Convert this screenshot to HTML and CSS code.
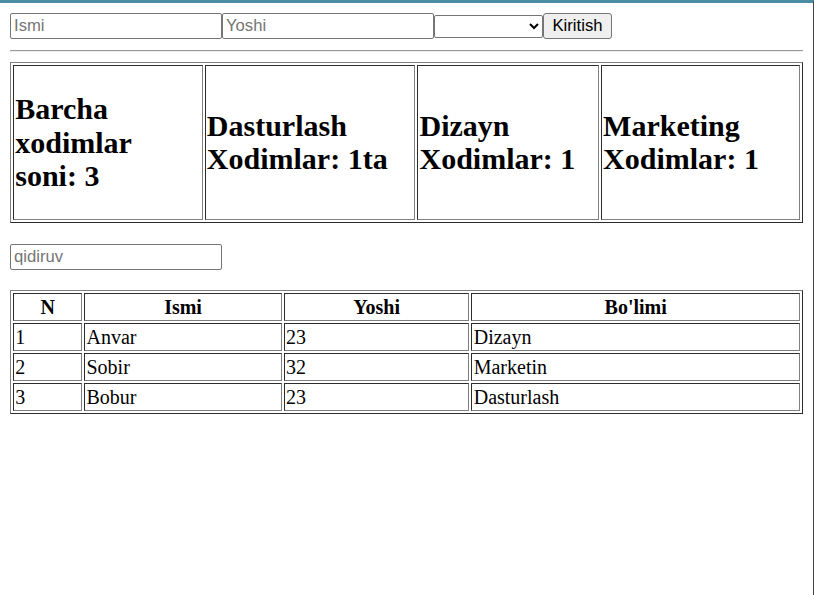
FILE: index.html
```html
<!DOCTYPE html>
<html lang="uz">
<head>
<meta charset="utf-8">
<title>Xodimlar</title>
<link rel="stylesheet" href="styles.css">
</head>
<body>
<div class="page">
  <div class="form-row"><input class="field" type="text" placeholder="Ismi"><input class="field" type="text" placeholder="Yoshi"><select class="picker"><option value=""></option><option>Dasturlash</option><option>Dizayn</option><option>Marketing</option></select><button class="btn" type="button">Kiritish</button></div>
  <hr class="rule">
  <table class="grid stats">
    <tr>
      <td class="s1"><h1 class="stat">Barcha xodimlar soni: 3</h1></td>
      <td class="s2"><h1 class="stat">Dasturlash Xodimlar: 1ta</h1></td>
      <td class="s3"><h1 class="stat">Dizayn Xodimlar: 1</h1></td>
      <td class="s4"><h1 class="stat">Marketing Xodimlar: 1</h1></td>
    </tr>
  </table>
  <div class="search-row"><input class="field" type="text" placeholder="qidiruv"></div>
  <table class="grid list">
    <tr>
      <th class="l1">N</th>
      <th class="l2">Ismi</th>
      <th class="l3">Yoshi</th>
      <th class="l4">Bo'limi</th>
    </tr>
    <tr><td>1</td><td>Anvar</td><td>23</td><td>Dizayn</td></tr>
    <tr><td>2</td><td>Sobir</td><td>32</td><td>Marketin</td></tr>
    <tr><td>3</td><td>Bobur</td><td>23</td><td>Dasturlash</td></tr>
  </table>
</div>
</body>
</html>
```
FILE: styles.css
```css
html, body {
  margin: 0;
  padding: 0;
  background: #ffffff;
}

body {
  font-family: "Liberation Serif", "Times New Roman", serif;
  font-size: 20px;
  line-height: 22px;
  color: #000000;
}

.page {
  box-sizing: border-box;
  min-height: 100vh;
  border-top: 3px solid #4a8ca5;
  border-right: 1px solid #444444;
  padding: 10px;
}

.form-row {
  display: flex;
  align-items: center;
}

.field {
  box-sizing: border-box;
  width: 212px;
  height: 26px;
  margin: 0;
  padding: 1px 3px;
  border: 1px solid #767676;
  border-radius: 2px;
  font-family: "Liberation Sans", Arial, sans-serif;
  font-size: 16.67px;
  color: #000000;
  background: #ffffff;
}

.field::placeholder {
  color: #757575;
}

.picker {
  box-sizing: border-box;
  width: 109px;
  height: 23px;
  margin: 0;
  border: 1px solid #767676;
  border-radius: 2px;
  font-family: "Liberation Sans", Arial, sans-serif;
  font-size: 16.67px;
  background: #ffffff;
  color: #000000;
}

.btn {
  box-sizing: border-box;
  width: 69px;
  height: 26px;
  margin: 0;
  padding: 1px 7px;
  border: 1px solid #767676;
  border-radius: 3px;
  background: #efefef;
  font-family: "Liberation Sans", Arial, sans-serif;
  font-size: 16.67px;
  color: #000000;
}

.rule {
  height: 0;
  margin: 11px 0 10px;
  border: 0;
  border-top: 1px solid #9a9a9a;
  border-bottom: 1px solid #eeeeee;
}

.grid {
  width: 100%;
  table-layout: fixed;
  border: 1px outset #808080;
  border-spacing: 2.5px;
  border-collapse: separate;
}

.grid td,
.grid th {
  box-sizing: border-box;
  border: 1px inset #808080;
  padding: 1.25px;
}

.list td,
.list th {
  line-height: 23.5px;
}

.grid th {
  font-weight: bold;
  text-align: center;
}

.grid td {
  text-align: left;
}

.s1 { width: 189px; }
.s2 { width: 210px; }
.s3 { width: 181px; }
.s4 { width: 198.5px; }

.stat {
  margin: 24.9px 0;
  font-size: 30px;
  line-height: 33.5px;
  font-weight: bold;
}

.search-row {
  display: flex;
  margin: 21.5px 0 20px;
}

.l1 { width: 69px; }
.l2 { width: 197px; }
.l3 { width: 185px; }
.l4 { width: 327.5px; }
```
